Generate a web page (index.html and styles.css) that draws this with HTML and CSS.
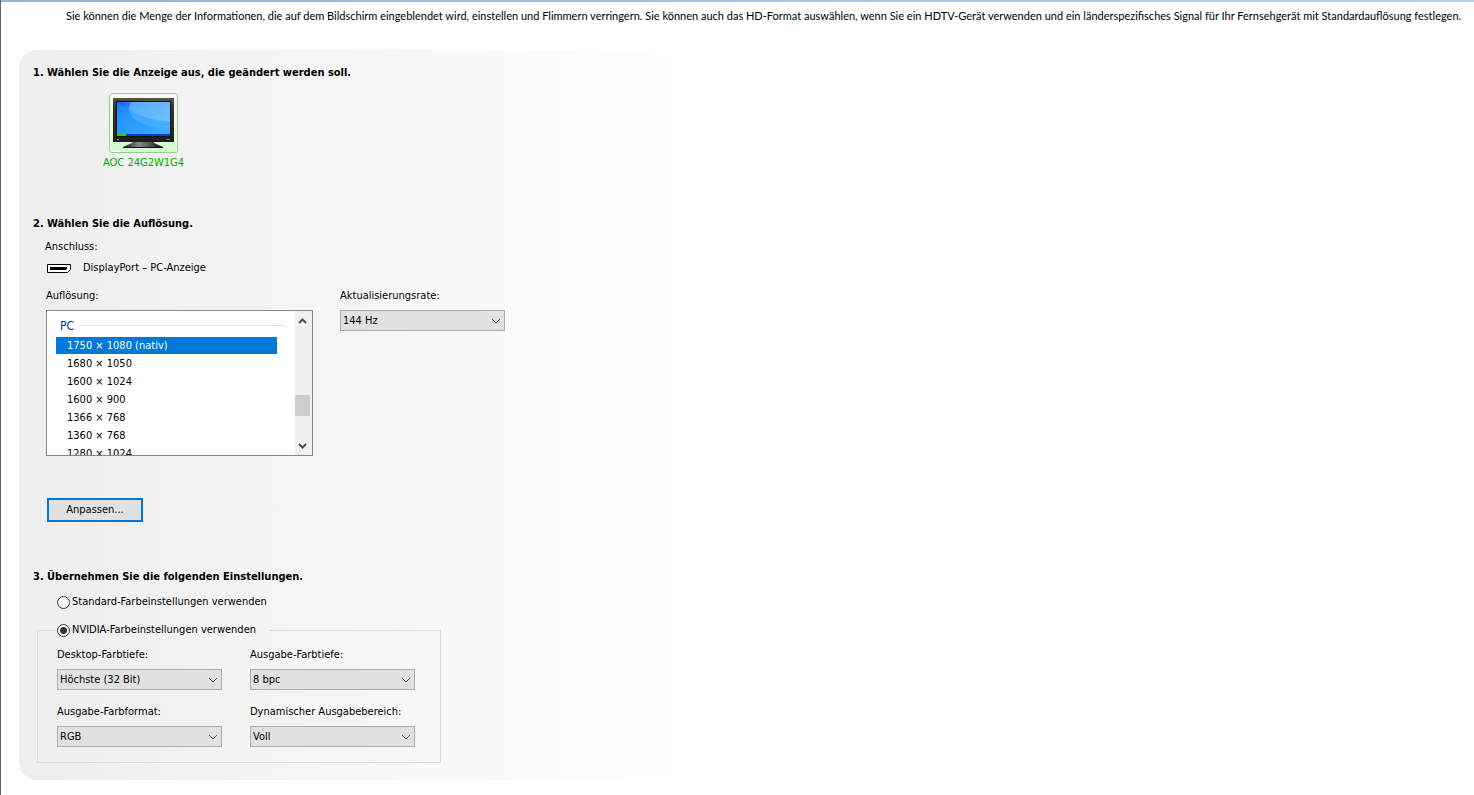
FILE: index.html
```html
<!DOCTYPE html>
<html lang="de">
    <head>
        <meta charset="UTF-8">
        <title>Auflösung ändern</title>
        <link rel="stylesheet" href="styles.css">
    </head>
    <body>
        <div id="wrap">
            <p class="intro">Sie können die Menge der Informationen, die auf dem Bildschirm eingeblendet wird, einstellen und Flimmern verringern. Sie können auch das HD-Format auswählen, wenn Sie ein HDTV-Gerät verwenden und ein länderspezifisches Signal für Ihr Fernsehgerät mit Standardauflösung festlegen.</p>
            <form class="panel">
                <h2>1. Wählen Sie die Anzeige aus, die geändert werden soll.</h2>
                <button type="button" class="display">
                    <span class="frame">
                        <svg width="61" height="52" viewBox="0 0 61 52">
                            <defs>
                                <linearGradient id="screen" x1="0" y1="0" x2="1" y2="0.6">
                                    <stop offset="0" stop-color="#1a5cff"/>
                                    <stop offset="0.35" stop-color="#2d95ff"/>
                                    <stop offset="1" stop-color="#4fb4ff"/>
                                </linearGradient>
                                <linearGradient id="bezel" x1="0" y1="0" x2="0" y2="1">
                                    <stop offset="0" stop-color="#555"/>
                                    <stop offset="0.2" stop-color="#333"/>
                                    <stop offset="1" stop-color="#1c1c1c"/>
                                </linearGradient>
                                <linearGradient id="foot" x1="0" y1="0" x2="1" y2="0">
                                    <stop offset="0" stop-color="#111"/>
                                    <stop offset="0.4" stop-color="#888"/>
                                    <stop offset="1" stop-color="#111"/>
                                </linearGradient>
                            </defs>
                            <path d="M20 43h21v2l9 4v1H10v-1l9-4z" fill="url(#foot)"/>
                            <path d="M20 43h21v1H20zM10 49h40v1H10z" fill="#111"/>
                            <rect width="61" height="44" fill="url(#bezel)"/>
                            <path d="M3 3h55v36H3z" fill="#111"/>
                            <path d="M4 4h53v32H4z" fill="url(#screen)"/>
                            <path d="M18 4h39v28C38 31 17 23 16 11c0-3 1-5 2-7z" fill="#8accff" opacity="0.5"/>
                            <path d="M4 4c14 12 32 18 53 20v12H4z" fill="#1d9dff" opacity="0.5"/>
                            <path d="M4 36h53v2H4z" fill="#2030d8"/>
                            <path d="M4 36h9v2H4z" fill="#3cc814"/>
                            <path d="M4 41h2v1H4z" fill="#2be02b"/>
                            <path d="M53 41h4v1h-4z" fill="#777"/>
                        </svg>
                    </span>
                    <span class="name">AOC 24G2W1G4</span>
                </button>

                <h2 class="step2">2. Wählen Sie die Auflösung.</h2>
                <div class="port">
                    <p>Anschluss:</p>
                    <p class="type">
                        <svg width="24" height="9" viewBox="0 0 24 9">
                            <path d="M0.5 0.5h23v5l-3 3h-20z" fill="#fff" stroke="#000"/>
                            <path d="M3 3h17v2l-1 1H3z" fill="#000"/>
                        </svg>
                        <span>DisplayPort – PC-Anzeige</span>
                    </p>
                </div>
                <div class="mode">
                    <div class="field">
                        <label for="resolution">Auflösung:</label>
                        <div class="list">
                            <select id="resolution" size="8">
                                <optgroup label="PC">
                                    <option selected>1750 × 1080 (nativ)</option>
                                    <option>1680 × 1050</option>
                                    <option>1600 × 1024</option>
                                    <option>1600 × 900</option>
                                    <option>1366 × 768</option>
                                    <option>1360 × 768</option>
                                    <option>1280 × 1024</option>
                                </optgroup>
                            </select>
                            <div class="bar">
                                <svg width="9" height="6" viewBox="0 0 9 6"><path d="M1 5l3.500-3.500L8 5" fill="none" stroke="#505050" stroke-width="2"/></svg>
                                <span class="thumb"></span>
                                <svg width="9" height="6" viewBox="0 0 9 6"><path d="M1 1l3.500 3.500L8 1" fill="none" stroke="#505050" stroke-width="2"/></svg>
                            </div>
                        </div>
                    </div>
                    <div class="field">
                        <label for="rate">Aktualisierungsrate:</label>
                        <select id="rate" class="drop"><option>144 Hz</option></select>
                    </div>
                </div>
                <button type="button" class="custom">Anpassen...</button>

                <h2 class="step3">3. Übernehmen Sie die folgenden Einstellungen.</h2>
                <label class="radio standard"><input type="radio" name="color">Standard-Farbeinstellungen verwenden</label>
                <fieldset>
                    <legend><label class="radio"><input type="radio" name="color" checked>NVIDIA-Farbeinstellungen verwenden</label></legend>
                    <div class="colors">
                        <div class="field">
                            <label for="desktop">Desktop-Farbtiefe:</label>
                            <select id="desktop" class="drop"><option>Höchste (32 Bit)</option></select>
                        </div>
                        <div class="field">
                            <label for="depth">Ausgabe-Farbtiefe:</label>
                            <select id="depth" class="drop"><option>8 bpc</option></select>
                        </div>
                        <div class="field">
                            <label for="format">Ausgabe-Farbformat:</label>
                            <select id="format" class="drop"><option>RGB</option></select>
                        </div>
                        <div class="field">
                            <label for="range">Dynamischer Ausgabebereich:</label>
                            <select id="range" class="drop"><option>Voll</option></select>
                        </div>
                    </div>
                </fieldset>
            </form>
        </div>
    </body>
</html>
```
FILE: styles.css
```css
*{box-sizing:border-box;}
body,p,h2{margin:0;}
body{
    background-color:#fff;
    color:#000;
    font:11px/16px "DejaVu Sans Condensed","Liberation Sans",sans-serif;
}
button,select,input{
    margin:0;
    font:inherit;
    color:inherit;
}
svg{display:block;}
#wrap{
    min-height:100vh;
    border-left:1px solid #646464;
    background:linear-gradient(90deg,#99b4d1,#b9d1ea) no-repeat top/100% 2px;
    padding:8px 8px 15px 18px;
}
.intro{
    margin-left:47px;
    font-family:Lato,"Liberation Sans",sans-serif;
}
.panel{
    width:48%;
    min-width:440px;
    margin-top:26px;
    padding:15px 14px 17px;
    border-radius:18px;
    background-image:linear-gradient(90deg,#eee,#fff);
}
h2{
    font-size:11px;
    line-height:16px;
    font-weight:bold;
}
.step2{margin-top:45px;}
.step3{margin-top:47px;}

/* Anzeige */
.display{
    display:flex;
    flex-direction:column;
    align-items:center;
    gap:2px;
    margin:12px 0 0 70px;
    padding:0;
    border:none;
    background:none;
    color:#00aa00;
}
.frame{
    padding:4px 3px 2px;
    border:1px solid #8ed47e;
    border-radius:3px;
    background-image:linear-gradient(#f4fff4,#ccffcc);
    box-shadow:inset 0 0 0 1px #fff;
}

/* Anschluss und Auflösung */
.port{margin:7px 0 0 12px;}
.port .type{
    display:flex;
    align-items:center;
    gap:12px;
    margin:5px 0 0 2px;
}
.mode{
    display:flex;
    gap:27px;
    margin:12px 0 0 13px;
}
.field{
    display:flex;
    flex-direction:column;
    gap:6px;
}
.list{
    display:flex;
    width:267px;
    height:146px;
    border:1px solid #828790;
    background-color:#fff;
    overflow:hidden;
}
.list select{
    flex:1;
    height:170px;
    padding:8px 0 0 9px;
    border:none;
    outline:none;
    border-radius:0;
    background-color:#fff;
    overflow:hidden;
}
.list optgroup{
    padding:0;
    font-size:12px;
    font-weight:normal;
    line-height:20px;
    text-indent:2px;
    color:#003399;
    background:linear-gradient(#d9e0ea,#d9e0ea) no-repeat 23px 6px/205px 1px;
}
.list option{
    width:221px;
    min-height:17px;
    margin-bottom:1px;
    padding:2px 0 0 11px;
    font-size:11px;
    text-indent:0;
    color:#000;
}
.list option:first-of-type{margin-top:3px;}
.list option::before{content:none;}
.list option:checked{
    color:#fff;
    background:linear-gradient(#0078d7,#0078d7);
}
.bar{
    display:flex;
    flex-direction:column;
    align-items:center;
    justify-content:space-between;
    width:17px;
    padding:7px 2px 6px 0;
    background-color:#f0f0f0;
}
.thumb{
    width:100%;
    height:21px;
    margin-top:43px;
    background-color:#cdcdcd;
}
.drop{
    width:165px;
    height:21px;
    padding:0 20px 0 2px;
    border:1px solid #adadad;
    border-radius:0;
    appearance:none;
    background:#e1e1e1 url("data:image/svg+xml,%3Csvg xmlns='http://www.w3.org/2000/svg' width='10' height='6'%3E%3Cpath d='M1 1l4 4 4-4' fill='none' stroke='%23555'/%3E%3C/svg%3E") no-repeat right 3px center;
}
.custom{
    display:block;
    width:96px;
    height:24px;
    margin:42px 0 0 14px;
    padding:0;
    border:2px solid #0078d7;
    background-color:#e1e1e1;
}

/* Farbeinstellungen */
.radio{
    display:flex;
    align-items:center;
    gap:2px;
}
.radio input{
    appearance:none;
    width:13px;
    height:13px;
    border:1px solid #333;
    border-radius:50%;
    background-color:#fff;
}
.radio input:checked{
    background-image:radial-gradient(circle,#333 3px,transparent 4px);
}
.standard{
    width:max-content;
    margin:9px 0 12px 24px;
}
fieldset{
    width:404px;
    margin:0 0 0 4px;
    padding:9px 0 15px 19px;
    border:1px solid #dcdcdc;
}
legend{
    padding:0 13px 0 0;
}
.colors{
    display:grid;
    grid-template-columns:165px 165px;
    gap:14px 28px;
}
```
